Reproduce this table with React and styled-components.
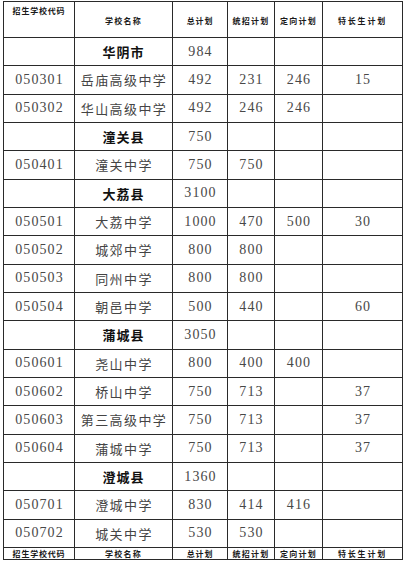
import React from "react";
import styled, { createGlobalStyle } from "styled-components";

const Global = createGlobalStyle`
  html, body { margin: 0; padding: 0; background: #fff; }
  body { font-family: "Liberation Serif", "Noto Sans CJK SC", serif; }
`;

const Sheet = styled.div`
  display: grid;
  grid-template-columns: 71px 98px 55px 47px 48px 80px;
  grid-template-rows: 36px repeat(18, 28.33px) 12.33px;
  width: max-content;
  margin: 1px 0 0 3px;
  border-left: 1px solid #2a2a2a;
  border-top: 1px solid #2a2a2a;
`;

const Cell = styled.div`
  box-sizing: border-box;
  border-right: 1px solid #2a2a2a;
  border-bottom: 1px solid #2a2a2a;
  display: flex;
  justify-content: center;
  align-items: center;
  line-height: 1;
  white-space: nowrap;
  overflow: hidden;
  color: #333;
`;

const HeadCell = styled(Cell)`
  align-items: ${(p) => (p.$top ? "flex-start" : "center")};
  padding-top: ${(p) => (p.$top ? "5px" : "3px")};
  font-family: "Noto Sans CJK SC", sans-serif;
  font-weight: 700;
  font-size: 8px;
  letter-spacing: ${(p) => p.$spacing || "1.2px"};
  color: #1a1a1a;
`;

const FootCell = styled(Cell)`
  font-family: "Noto Sans CJK SC", sans-serif;
  font-weight: 700;
  font-size: 8px;
  letter-spacing: ${(p) => p.$spacing || "1.2px"};
  color: #1a1a1a;
`;

const NumCell = styled(Cell)`
  font-family: "Liberation Serif", serif;
  font-size: 14px;
  letter-spacing: 1.1px;
  padding-left: 1px;
  color: #484848;
`;

const NameCell = styled(Cell)`
  font-family: "Noto Sans CJK SC", sans-serif;
  font-size: 13px;
  font-weight: 400;
  letter-spacing: 1.4px;
  padding-left: 1px;
  color: #444;
`;

const RegionCell = styled(Cell)`
  font-family: "Noto Sans CJK SC", sans-serif;
  font-size: 13px;
  font-weight: 700;
  letter-spacing: 1px;
  color: #111;
`;

const headers = [
  { t: "招生学校代码", top: true, s: "0.8px" },
  { t: "学校名称" },
  { t: "总计划", s: "0.8px" },
  { t: "统招计划" },
  { t: "定向计划" },
  { t: "特长生计划", s: "1.8px" },
];

const rows = [
  { region: "华阴市", total: "984" },
  { code: "050301", name: "岳庙高级中学", total: "492", a: "231", b: "246", c: "15" },
  { code: "050302", name: "华山高级中学", total: "492", a: "246", b: "246" },
  { region: "潼关县", total: "750" },
  { code: "050401", name: "潼关中学", total: "750", a: "750" },
  { region: "大荔县", total: "3100" },
  { code: "050501", name: "大荔中学", total: "1000", a: "470", b: "500", c: "30" },
  { code: "050502", name: "城郊中学", total: "800", a: "800" },
  { code: "050503", name: "同州中学", total: "800", a: "800" },
  { code: "050504", name: "朝邑中学", total: "500", a: "440", c: "60" },
  { region: "蒲城县", total: "3050" },
  { code: "050601", name: "尧山中学", total: "800", a: "400", b: "400" },
  { code: "050602", name: "桥山中学", total: "750", a: "713", c: "37" },
  { code: "050603", name: "第三高级中学", total: "750", a: "713", c: "37" },
  { code: "050604", name: "蒲城中学", total: "750", a: "713", c: "37" },
  { region: "澄城县", total: "1360" },
  { code: "050701", name: "澄城中学", total: "830", a: "414", b: "416" },
  { code: "050702", name: "城关中学", total: "530", a: "530" },
];

export default function App() {
  return (
    <>
      <Global />
      <Sheet>
        {headers.map((h) => (
          <HeadCell key={"h" + h.t} $top={h.top} $spacing={h.s}>
            {h.t}
          </HeadCell>
        ))}
        {rows.map((r, i) =>
          r.region ? (
            <React.Fragment key={i}>
              <Cell />
              <RegionCell>{r.region}</RegionCell>
              <NumCell>{r.total}</NumCell>
              <Cell />
              <Cell />
              <Cell />
            </React.Fragment>
          ) : (
            <React.Fragment key={i}>
              <NumCell>{r.code}</NumCell>
              <NameCell>{r.name}</NameCell>
              <NumCell>{r.total}</NumCell>
              <NumCell>{r.a || ""}</NumCell>
              <NumCell>{r.b || ""}</NumCell>
              <NumCell>{r.c || ""}</NumCell>
            </React.Fragment>
          )
        )}
        {headers.map((h) => (
          <FootCell key={"f" + h.t} $spacing={h.s}>
            {h.t}
          </FootCell>
        ))}
      </Sheet>
    </>
  );
}
